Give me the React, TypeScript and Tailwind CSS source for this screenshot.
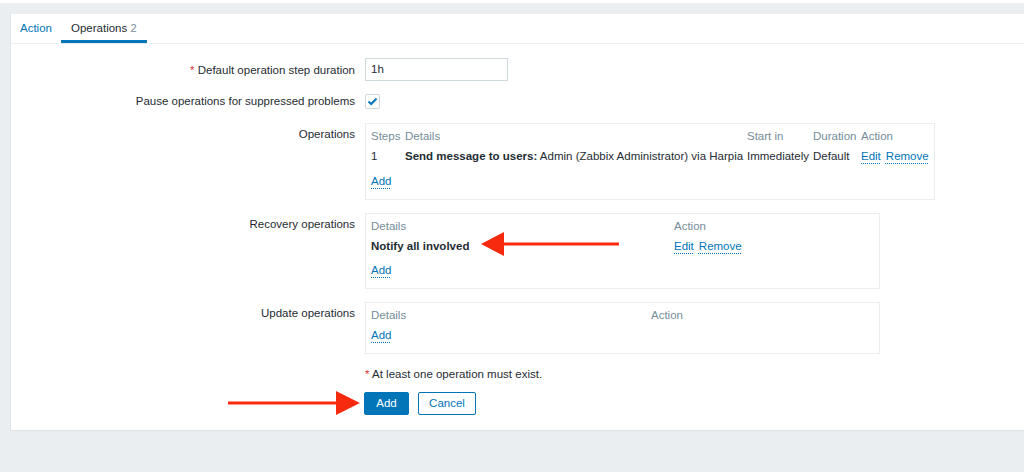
import React from "react";

const LINK = "text-[#0275b8] underline decoration-dotted decoration-1 underline-offset-[3px]";
const HEAD = "text-[#768d99]";

function Label({ children, top = false }: { children: React.ReactNode; top?: boolean }) {
  return (
    <div className={`w-[344px] shrink-0 text-right leading-4 ${top ? "pt-[3px]" : ""}`}>{children}</div>
  );
}

export default function App() {
  return (
    <div
      className="relative w-[1024px] h-[472px] overflow-hidden bg-[#ebeef0] text-[11.5px] text-[#1f2c33]"
      style={{ fontFamily: '"Liberation Sans", Arial, sans-serif' }}
    >
      <div className="h-[3px] bg-white" />
      <div className="ml-[10px] mt-[11px] w-[1014px] bg-white border-l border-b border-[#dfe4e7] pb-[15px]">
        {/* tabs */}
        <div className="flex h-[30px] border-b border-[#ebeef0]">
          <div className="pl-[9px] pr-[9px] flex items-center text-[#0275b8]">Action</div>
          <div className="px-[10px] flex items-center border-b-[3px] border-[#0275b8] pt-[3px]">
            Operations&nbsp;<span className="text-[#768d99] text-[11px]">2</span>
          </div>
        </div>

        <div className="pt-[14px]">
          {/* row 1 */}
          <div className="flex items-center gap-[10px]">
            <Label>
              <span className="text-[#e33734]">*</span> Default operation step duration
            </Label>
            <div className="w-[143px] h-[23px] border border-[#cfd8dc] flex items-center px-[5px]">1h</div>
          </div>

          {/* row 2 */}
          <div className="flex items-center gap-[10px] mt-[12px] h-[16px]">
            <Label>Pause operations for suppressed problems</Label>
            <div className="w-[15px] h-[15px] border border-[#cfd8dc] rounded-[2px] flex items-center justify-center">
              <svg width="11" height="9" viewBox="0 0 11 9">
                <polyline points="1.5,4.5 4.2,7 9.5,1.5" fill="none" stroke="#0275b8" strokeWidth="2" />
              </svg>
            </div>
          </div>

          {/* Operations */}
          <div className="flex gap-[10px] mt-[14px]">
            <Label top>Operations</Label>
            <div className="w-[570px] border border-[#ebeef0] pt-[4px] pb-[10px] px-[5px] leading-4">
              <div className={`grid grid-cols-[34px_342px_66px_48px_auto] ${HEAD}`}>
                <div>Steps</div>
                <div>Details</div>
                <div>Start in</div>
                <div>Duration</div>
                <div>Action</div>
              </div>
              <div className="grid grid-cols-[34px_342px_66px_48px_auto] mt-[4px] whitespace-nowrap">
                <div>1</div>
                <div>
                  <span className="font-bold">Send message to users:</span> Admin (Zabbix Administrator) via Harpia
                </div>
                <div>Immediately</div>
                <div>Default</div>
                <div className="flex gap-[5px]">
                  <span className={LINK}>Edit</span>
                  <span className={LINK}>Remove</span>
                </div>
              </div>
              <div className="mt-[9px]">
                <span className={LINK}>Add</span>
              </div>
            </div>
          </div>

          {/* Recovery operations */}
          <div className="flex gap-[10px] mt-[13px]">
            <Label top>Recovery operations</Label>
            <div className="w-[515px] border border-[#ebeef0] pt-[4px] pb-[10px] px-[5px] leading-4">
              <div className={`grid grid-cols-[303px_auto] ${HEAD}`}>
                <div>Details</div>
                <div>Action</div>
              </div>
              <div className="grid grid-cols-[303px_auto] mt-[4px]">
                <div className="font-bold">Notify all involved</div>
                <div className="flex gap-[5px]">
                  <span className={LINK}>Edit</span>
                  <span className={LINK}>Remove</span>
                </div>
              </div>
              <div className="mt-[8px]">
                <span className={LINK}>Add</span>
              </div>
            </div>
          </div>

          {/* Update operations */}
          <div className="flex gap-[10px] mt-[13px]">
            <Label top>Update operations</Label>
            <div className="w-[515px] border border-[#ebeef0] pt-[4px] pb-[10px] px-[5px] leading-4">
              <div className={`grid grid-cols-[280px_auto] ${HEAD}`}>
                <div>Details</div>
                <div>Action</div>
              </div>
              <div className="mt-[4px]">
                <span className={LINK}>Add</span>
              </div>
            </div>
          </div>

          {/* note */}
          <div className="flex gap-[10px] mt-[12px] leading-4">
            <div className="w-[344px] shrink-0" />
            <div>
              <span className="text-[#e33734]">*</span> At least one operation must exist.
            </div>
          </div>

          {/* buttons */}
          <div className="flex gap-[10px] mt-[10px]">
            <div className="w-[343px] shrink-0" />
            <div className="flex gap-[9px]">
              <button className="w-[45px] h-[23px] bg-[#0275b8] text-white rounded-[2px] border border-[#0275b8]">Add</button>
              <button className="w-[58px] h-[23px] bg-white text-[#0275b8] rounded-[2px] border border-[#0275b8]">Cancel</button>
            </div>
          </div>
        </div>
      </div>

      {/* annotation arrows */}
      <svg className="absolute inset-0 pointer-events-none" width="1024" height="472">
        <line x1="619" y1="244" x2="500" y2="244" stroke="#f7290f" strokeWidth="3" />
        <polygon points="481,244 504,232 504,256" fill="#f7290f" />
        <line x1="228" y1="403" x2="340" y2="403" stroke="#f7290f" strokeWidth="3" />
        <polygon points="360,403 336,391 336,415" fill="#f7290f" />
      </svg>
    </div>
  );
}
